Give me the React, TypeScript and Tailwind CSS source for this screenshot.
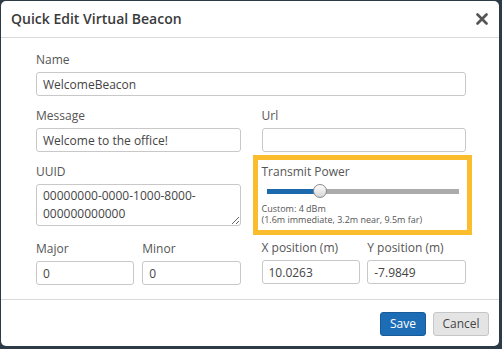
import React from "react";

const font = { fontFamily: '"Open Sans", "Liberation Sans", sans-serif' };

function Field({
  label,
  value,
  className = "",
}: {
  label: string;
  value: string;
  className?: string;
}) {
  return (
    <div className={className}>
      <label className="block text-[12px] leading-[18px] text-[#555] mb-[3px]">
        {label}
      </label>
      <input
        readOnly
        value={value}
        className="block w-full h-[24px] px-[6px] text-[12px] text-[#444] bg-white border border-[#c8c8c8] rounded-[3px] outline-none"
      />
    </div>
  );
}

export default function App() {
  const percent = 27.8;

  return (
    <div
      className="w-[502px] h-[349px] bg-[#2d3b46] pl-px pt-px pr-[3px] pb-[3px]"
      style={font}
    >
      <div className="w-full h-full bg-white rounded-[5px] flex flex-col">
        {/* Header */}
        <div className="h-[37px] shrink-0 flex items-center justify-between pl-[10px] pr-[11px] border-b border-[#d9d9d9]">
          <h1 className="text-[14px] leading-[20px] font-semibold text-[#3a3a3a]">
            Quick Edit Virtual Beacon
          </h1>
          <button className="text-[#555] leading-none" aria-label="Close">
            <svg width="12" height="12" viewBox="0 0 12 12">
              <path
                d="M1.5 1.5 L10.5 10.5 M10.5 1.5 L1.5 10.5"
                stroke="#555"
                strokeWidth="2.6"
                strokeLinecap="round"
              />
            </svg>
          </button>
        </div>

        {/* Body */}
        <div className="flex-1 pl-[35px] pr-[33px] pt-[13px]">
          <Field label="Name" value="WelcomeBeacon" className="mb-[11px]" />

          <div className="grid grid-cols-2 gap-x-[21px]">
            {/* left column */}
            <div>
              <Field
                label="Message"
                value="Welcome to the office!"
                className="mb-[11px]"
              />
              <div className="mb-[14px]">
                <label className="block text-[12px] leading-[18px] text-[#555] mb-[3px]">
                  UUID
                </label>
                <textarea
                  readOnly
                  value="00000000-0000-1000-8000-000000000000"
                  className="block w-full h-[42px] px-[6px] py-[2px] text-[12px] leading-[18px] text-[#444] border border-[#c8c8c8] rounded-[3px] outline-none"
                />
              </div>
              <div className="grid grid-cols-2 gap-x-[8px]">
                <Field label="Major" value="0" />
                <Field label="Minor" value="0" />
              </div>
            </div>

            {/* right column */}
            <div>
              <Field label="Url" value="" className="mb-[3px]" />

              <div className="ml-[-9px] mr-[-6px] border-[5px] border-[#fbbc2d] pl-[4px] pr-[8px] pt-[3px] pb-[5px]">
                <div className="text-[12px] leading-[18px] text-[#555]">
                  Transmit Power
                </div>
                <div className="relative h-[16px] ml-[5px] mt-[2px]">
                  <div className="absolute left-0 right-0 top-[6px] h-[5px] bg-[#ababab]" />
                  <div
                    className="absolute left-0 top-[6px] h-[5px] bg-[#1d69ae]"
                    style={{ width: `${percent}%` }}
                  />
                  <div
                    className="absolute top-[1px] w-[14px] h-[14px] -ml-[7px] rounded-full border border-[#8a8a8a] bg-gradient-to-b from-white to-[#d6d6d6]"
                    style={{ left: `${percent}%` }}
                  />
                </div>
                <div className="mt-[4px] text-[9px] leading-[11px] text-[#555]">
                  Custom: 4 dBm
                </div>
                <div className="text-[9px] leading-[11px] text-[#555]">
                  (1.6m immediate, 3.2m near, 9.5m far)
                </div>
              </div>

              <div className="grid grid-cols-2 gap-x-[7px] mt-[4px]">
                <Field label="X position (m)" value="10.0263" />
                <Field label="Y position (m)" value="-7.9849" />
              </div>
            </div>
          </div>
        </div>

        {/* Footer */}
        <div className="h-[47px] shrink-0 border-t border-[#d9d9d9] flex items-start justify-end gap-[7px] pr-[10px] pt-[12px]">
          <button className="h-[24px] w-[46px] text-[12px] text-white bg-[#1c6db5] border border-[#175c99] rounded-[3px]">
            Save
          </button>
          <button className="h-[24px] w-[56px] text-[12px] text-[#444] bg-[#e4e4e4] border border-[#c6c6c6] rounded-[3px]">
            Cancel
          </button>
        </div>
      </div>
    </div>
  );
}
